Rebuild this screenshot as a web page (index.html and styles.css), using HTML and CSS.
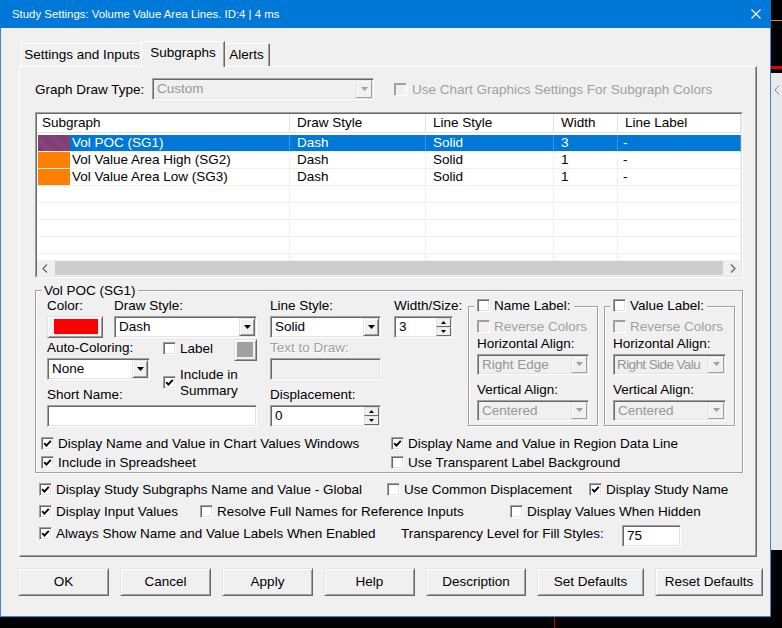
FILE: index.html
```html
<!DOCTYPE html>
<html>
<head>
	<meta charset="UTF-8">
	<title>Study Settings</title>
	<link rel="stylesheet" href="styles.css">
</head>
<body>
<div class="screen">
	<div class="main-col">
		<div class="dialog">
			<div class="titlebar">
				<span class="title">Study Settings: Volume Value Area Lines. ID:4 | 4 ms</span>
				<svg class="close" width="10" height="10" viewBox="0 0 10 10"><path d="M0.5 0.5L9.5 9.5M9.5 0.5L0.5 9.5" stroke="#fff" stroke-width="1.1"/></svg>
			</div>
			<div class="client">
				<div class="tabs">
					<div class="tab t1">Settings and Inputs</div>
					<div class="tab sel">Subgraphs</div>
					<div class="tab t3">Alerts</div>
				</div>
				<div class="panel">
					<div class="gdt">
						<span class="gdt-label">Graph Draw Type:</span>
						<div class="combo off w-gdt"><span class="val">Custom</span><span class="drop"><svg width="7" height="4" viewBox="0 0 7 4"><path d="M0 0h7L3.5 4z"/></svg></span></div>
						<label class="cb off gdt-cb"><span class="box"></span>Use Chart Graphics Settings For Subgraph Colors</label>
					</div>

					<div class="list">
						<div class="list-in">
							<div class="lhead">
								<div>Subgraph</div><div>Draw Style</div><div>Line Style</div><div>Width</div><div>Line Label</div>
							</div>
							<div class="lbody">
								<div class="lrow sel">
									<div class="c1"><span class="sw purple"></span><span class="nm">Vol POC (SG1)</span></div>
									<div>Dash</div><div>Solid</div><div>3</div><div>-</div>
								</div>
								<div class="lrow">
									<div class="c1"><span class="sw orange"></span><span class="nm">Vol Value Area High (SG2)</span></div>
									<div>Dash</div><div>Solid</div><div>1</div><div>-</div>
								</div>
								<div class="lrow">
									<div class="c1"><span class="sw orange"></span><span class="nm">Vol Value Area Low (SG3)</span></div>
									<div>Dash</div><div>Solid</div><div>1</div><div>-</div>
								</div>
								<div class="lrow"><div class="c1"></div><div></div><div></div><div></div><div></div></div>
								<div class="lrow"><div class="c1"></div><div></div><div></div><div></div><div></div></div>
								<div class="lrow"><div class="c1"></div><div></div><div></div><div></div><div></div></div>
								<div class="lrow"><div class="c1"></div><div></div><div></div><div></div><div></div></div>
								<div class="lrow"><div class="c1"></div><div></div><div></div><div></div><div></div></div>
							</div>
							<div class="hscroll">
								<span class="sbtn"><svg width="6" height="9" viewBox="0 0 6 9"><path d="M5 0.5L1 4.5L5 8.5" fill="none" stroke="#606060" stroke-width="1.2"/></svg></span>
								<span class="thumb"></span>
								<span class="sbtn"><svg width="6" height="9" viewBox="0 0 6 9"><path d="M1 0.5L5 4.5L1 8.5" fill="none" stroke="#606060" stroke-width="1.2"/></svg></span>
							</div>
						</div>
					</div>

					<fieldset class="grp main">
						<legend>Vol POC (SG1)</legend>
						<div class="form">
							<div class="col-a">
								<div class="pair p1">
									<div class="fld w-color">
										<div class="lbl">Color:</div>
										<div class="swbtn"><span class="red"></span></div>
									</div>
									<div class="fld w-ds">
										<div class="lbl">Draw Style:</div>
										<div class="combo"><span class="val">Dash</span><span class="drop"><svg width="7" height="4" viewBox="0 0 7 4"><path d="M0 0h7L3.5 4z"/></svg></span></div>
									</div>
								</div>
								<div class="pair p2">
									<div class="fld w-auto">
										<div class="lbl">Auto-Coloring:</div>
										<div class="combo"><span class="val">None</span><span class="drop"><svg width="7" height="4" viewBox="0 0 7 4"><path d="M0 0h7L3.5 4z"/></svg></span></div>
									</div>
									<div class="lblchecks">
										<label class="cb row16"><span class="box"></span>Label</label>
										<label class="cb two"><span class="box"><svg width="9" height="9" viewBox="0 0 9 9"><path d="M1.2 4.2L3.4 6.6L7.8 1.8" fill="none" stroke="#000" stroke-width="1.9"/></svg></span><span>Include in<br>Summary</span></label>
									</div>
									<div class="graybtn"><span></span></div>
								</div>
								<div class="fld">
									<div class="lbl">Short Name:</div>
									<div class="edit"></div>
								</div>
							</div>

							<div class="col-b">
								<div class="fld">
									<div class="lbl">Line Style:</div>
									<div class="combo"><span class="val">Solid</span><span class="drop"><svg width="7" height="4" viewBox="0 0 7 4"><path d="M0 0h7L3.5 4z"/></svg></span></div>
								</div>
								<div class="fld f2">
									<div class="lbl dis">Text to Draw:</div>
									<div class="edit off"></div>
								</div>
								<div class="fld f3">
									<div class="lbl">Displacement:</div>
									<div class="spin"><span class="val">0</span><span class="arrows"><span class="sb"><svg width="5" height="3" viewBox="0 0 5 3"><path d="M0 3h5L2.5 0z"/></svg></span><span class="sb"><svg width="5" height="3" viewBox="0 0 5 3"><path d="M0 0h5L2.5 3z"/></svg></span></span></div>
								</div>
							</div>

							<div class="col-c">
								<div class="fld">
									<div class="lbl">Width/Size:</div>
									<div class="spin"><span class="val">3</span><span class="arrows"><span class="sb"><svg width="5" height="3" viewBox="0 0 5 3"><path d="M0 3h5L2.5 0z"/></svg></span><span class="sb"><svg width="5" height="3" viewBox="0 0 5 3"><path d="M0 0h5L2.5 3z"/></svg></span></span></div>
								</div>
							</div>

							<fieldset class="grp sub sub-name">
								<legend><label class="cb"><span class="box"></span>Name Label:</label></legend>
								<label class="cb off rev"><span class="box"></span>Reverse Colors</label>
								<div class="lbl s1">Horizontal Align:</div>
								<div class="combo off"><span class="val">Right Edge</span><span class="drop"><svg width="7" height="4" viewBox="0 0 7 4"><path d="M0 0h7L3.5 4z"/></svg></span></div>
								<div class="lbl s2">Vertical Align:</div>
								<div class="combo off"><span class="val">Centered</span><span class="drop"><svg width="7" height="4" viewBox="0 0 7 4"><path d="M0 0h7L3.5 4z"/></svg></span></div>
							</fieldset>

							<fieldset class="grp sub sub-value">
								<legend><label class="cb"><span class="box"></span>Value Label:</label></legend>
								<label class="cb off rev"><span class="box"></span>Reverse Colors</label>
								<div class="lbl s1">Horizontal Align:</div>
								<div class="combo off"><span class="val tight">Right Side Valu</span><span class="drop"><svg width="7" height="4" viewBox="0 0 7 4"><path d="M0 0h7L3.5 4z"/></svg></span></div>
								<div class="lbl s2">Vertical Align:</div>
								<div class="combo off"><span class="val">Centered</span><span class="drop"><svg width="7" height="4" viewBox="0 0 7 4"><path d="M0 0h7L3.5 4z"/></svg></span></div>
							</fieldset>
						</div>

						<div class="checks">
							<div class="crow">
								<label class="cb w350"><span class="box"><svg width="9" height="9" viewBox="0 0 9 9"><path d="M1.2 4.2L3.4 6.6L7.8 1.8" fill="none" stroke="#000" stroke-width="1.9"/></svg></span>Display Name and Value in Chart Values Windows</label>
								<label class="cb"><span class="box"><svg width="9" height="9" viewBox="0 0 9 9"><path d="M1.2 4.2L3.4 6.6L7.8 1.8" fill="none" stroke="#000" stroke-width="1.9"/></svg></span>Display Name and Value in Region Data Line</label>
							</div>
							<div class="crow">
								<label class="cb w350"><span class="box"><svg width="9" height="9" viewBox="0 0 9 9"><path d="M1.2 4.2L3.4 6.6L7.8 1.8" fill="none" stroke="#000" stroke-width="1.9"/></svg></span>Include in Spreadsheet</label>
								<label class="cb"><span class="box"></span>Use Transparent Label Background</label>
							</div>
						</div>
					</fieldset>

					<div class="opts">
						<div class="orow">
							<label class="cb w348"><span class="box"><svg width="9" height="9" viewBox="0 0 9 9"><path d="M1.2 4.2L3.4 6.6L7.8 1.8" fill="none" stroke="#000" stroke-width="1.9"/></svg></span>Display Study Subgraphs Name and Value - Global</label>
							<label class="cb w202"><span class="box"></span>Use Common Displacement</label>
							<label class="cb"><span class="box"><svg width="9" height="9" viewBox="0 0 9 9"><path d="M1.2 4.2L3.4 6.6L7.8 1.8" fill="none" stroke="#000" stroke-width="1.9"/></svg></span>Display Study Name</label>
						</div>
						<div class="orow">
							<label class="cb w161"><span class="box"><svg width="9" height="9" viewBox="0 0 9 9"><path d="M1.2 4.2L3.4 6.6L7.8 1.8" fill="none" stroke="#000" stroke-width="1.9"/></svg></span>Display Input Values</label>
							<label class="cb w310"><span class="box"></span>Resolve Full Names for Reference Inputs</label>
							<label class="cb"><span class="box"></span>Display Values When Hidden</label>
						</div>
						<div class="orow">
							<label class="cb w362"><span class="box"><svg width="9" height="9" viewBox="0 0 9 9"><path d="M1.2 4.2L3.4 6.6L7.8 1.8" fill="none" stroke="#000" stroke-width="1.9"/></svg></span>Always Show Name and Value Labels When Enabled</label>
							<span class="w221">Transparency Level for Fill Styles:</span>
							<div class="edit trans"><span class="val">75</span></div>
						</div>
					</div>
				</div>

				<div class="buttons">
					<div class="btn w91">OK</div>
					<div class="btn w91">Cancel</div>
					<div class="btn w91">Apply</div>
					<div class="btn w91">Help</div>
					<div class="btn w100">Description</div>
					<div class="btn w107">Set Defaults</div>
					<div class="btn w108">Reset Defaults</div>
				</div>
			</div>
		</div>
		<div class="under"><span></span></div>
	</div>
	<div class="strip">
		<div class="s-black h20"></div>
		<div class="s-orange"></div>
		<div class="s-black h45"></div>
		<div class="s-red"></div>
		<div class="s-black h4"></div>
		<div class="s-gray"><svg width="6" height="10" viewBox="0 0 6 10"><path d="M5 0.5L1 5L5 9.5" fill="none" stroke="#888" stroke-width="1"/></svg></div>
	</div>
</div>
</body>
</html>
```

FILE: styles.css
```css
body{
	margin: 0;
	background: #000;
	font-family: "Liberation Sans", Arial, sans-serif;
	font-size: 13.5px;
	color: #000;
}
.screen{
	display: flex;
	width: 782px;
	height: 628px;
	overflow: hidden;
}
.main-col{
	width: 771px;
	display: flex;
	flex-direction: column;
}
.dialog{
	height: 617px;
	box-sizing: border-box;
	border: 1px solid #3a86d4;
	border-top: 0;
	background: #f0f0f0;
}
.titlebar{
	height: 28px;
	margin: 0 -1px;
	background: #0078d7;
	display: flex;
	align-items: center;
	padding: 0 10px 0 12px;
	color: #fff;
	font-size: 11.4px;
}
.close{
	margin-left: auto;
}
.client{
	padding: 13px 0 0 18px;
}

/* tabs */
.tabs{
	display: flex;
	align-items: flex-end;
	height: 25px;
	padding-left: 2px;
}
.tab{
	height: 23px;
	box-sizing: border-box;
	border: 1px solid;
	border-bottom: 0;
	border-color: #fff #696969 transparent #fff;
	box-shadow: inset -1px 0 #a0a0a0;
	text-align: center;
	line-height: 21px;
	white-space: nowrap;
}
.t1{ width: 122px; }
.t3{ width: 47px; }
.tab.sel{
	width: 84px;
	height: 26px;
	margin: 0 -2px -1px;
	position: relative;
	z-index: 1;
	background: #f0f0f0;
	line-height: 22px;
}
.panel{
	width: 738px;
	height: 491px;
	box-sizing: border-box;
	border: 1px solid;
	border-color: #fff #696969 #696969 #fff;
	box-shadow: inset -1px -1px #a0a0a0;
	padding: 11px 13px 0 15px;
}

/* common controls */
.combo,.edit,.spin{
	height: 22px;
	box-sizing: border-box;
	border: 1px solid;
	border-color: #a0a0a0 #fff #fff #a0a0a0;
	box-shadow: inset 1px 1px #696969, inset -1px -1px #e3e3e3;
	background: #fff;
	display: flex;
}
.combo .val,.spin .val,.edit .val{
	flex: 1;
	min-width: 0;
	padding-left: 4px;
	line-height: 20px;
	white-space: nowrap;
	overflow: hidden;
}
.combo .val.tight{
	padding-left: 3px;
	letter-spacing: -0.6px;
}
.combo .drop{
	width: 16px;
	flex: none;
	margin: 1px 1px 1px 0;
	box-sizing: border-box;
	border: 1px solid;
	border-color: #e3e3e3 #696969 #696969 #e3e3e3;
	box-shadow: inset 1px 1px #fff, inset -1px -1px #a0a0a0;
	background: #f0f0f0;
	display: flex;
	align-items: center;
	justify-content: center;
}
.combo.off,.edit.off{
	background: #f0f0f0;
}
.combo.off .val{
	color: #969696;
}
.combo.off .drop{
	border-color: #e3e3e3 #a0a0a0 #a0a0a0 #e3e3e3;
	box-shadow: inset 1px 1px #fff;
}
.combo.off .drop svg{
	fill: #a0a0a0;
}
.spin .arrows{
	width: 15px;
	margin: 1px 1px 1px 0;
	display: flex;
	flex-direction: column;
}
.spin .sb{
	flex: 1;
	box-sizing: border-box;
	border: 1px solid;
	border-color: #e3e3e3 #696969 #696969 #e3e3e3;
	background: #f0f0f0;
	display: flex;
	align-items: center;
	justify-content: center;
}
.cb{
	display: inline-flex;
	align-items: center;
	gap: 4px;
	white-space: nowrap;
}
.box{
	width: 13px;
	height: 13px;
	flex: none;
	box-sizing: border-box;
	border: 1px solid;
	border-color: #a0a0a0 #fff #fff #a0a0a0;
	box-shadow: inset 1px 1px #696969, inset -1px -1px #e3e3e3;
	background: #fff;
	display: flex;
	align-items: center;
	justify-content: center;
}
.cb.off{
	color: #a0a0a0;
}
.cb.off .box{
	background: #f0f0f0;
	box-shadow: inset 1px 1px #a0a0a0;
}
.lbl{
	line-height: 15px;
	margin-bottom: 3px;
	white-space: nowrap;
}
.lbl.dis{
	color: #a0a0a0;
	text-shadow: 1px 1px #fff;
}

/* graph draw type row */
.gdt{
	display: flex;
	align-items: center;
	height: 22px;
}
.gdt-label{
	width: 117px;
}
.w-gdt{
	width: 222px;
}
.gdt-cb{
	margin-left: 20px;
	gap: 5px;
}

/* subgraph list */
.list{
	margin-top: 12px;
	height: 166px;
	box-sizing: border-box;
	border: 1px solid;
	border-color: #a0a0a0 #fff #fff #a0a0a0;
}
.list-in{
	height: 100%;
	box-sizing: border-box;
	border: 1px solid;
	border-color: #696969 #e3e3e3 #e3e3e3 #696969;
	background: #fff;
	display: flex;
	flex-direction: column;
}
.lhead,.lrow{
	display: grid;
	grid-template-columns: 253px 136px 128px 64px 1fr;
}
.lhead > div{
	height: 19px;
	box-sizing: border-box;
	border-right: 1px solid #e5e5e5;
	border-bottom: 1px solid #e5e5e5;
	padding-left: 7px;
	line-height: 18px;
}
.lhead > div:first-child{
	padding-left: 5px;
}
.lbody{
	flex: 1;
	overflow: hidden;
	padding-top: 2px;
}
.lrow{
	height: 17px;
}
.lrow > div{
	box-sizing: border-box;
	border-right: 1px solid #f0f0f0;
	border-bottom: 1px solid #f0f0f0;
	padding-left: 7px;
	line-height: 16px;
	white-space: nowrap;
}
.lrow > div:last-child{
	padding-left: 5px;
}
.lrow > .c1{
	display: flex;
	padding-left: 0;
}
.sw{
	width: 32px;
	margin-left: 1px;
	height: 16px;
}
.sw.purple{
	background: repeating-linear-gradient(45deg, #7a3a70 0 1px, #8a4a80 1px 2px);
}
.sw.orange{
	background: #ff7f00;
}
.nm{
	flex: 1;
	padding-left: 2px;
}
.lrow.sel > div:not(.c1),.lrow.sel .nm{
	background: #0078d7;
	color: #fff;
}
.lrow.sel > div{
	border-right-color: #3d96e0;
}
.hscroll{
	height: 16px;
	display: flex;
	background: #f0f0f0;
}
.sbtn{
	width: 16px;
	display: flex;
	align-items: center;
	justify-content: center;
}
.thumb{
	flex: 1;
	background: #cdcdcd;
	margin: 1px 2px;
}

/* group boxes */
.grp{
	margin: 0;
	padding: 0;
	min-width: 0;
	border: 1px solid #a0a0a0;
	box-shadow: 1px 1px #fff, inset 1px 1px #fff;
}
.grp legend{
	padding: 0 2px;
	line-height: 15px;
	background: #f0f0f0;
}
.grp.main{
	margin-top: 5px;
	padding: 0 5px;
}
.grp.main > legend{
	margin-left: 1px;
}
.form{
	display: flex;
	margin-left: 6px;
	height: 129px;
}
.col-a{
	width: 210px;
}
.pair{
	display: flex;
}
.p1{
	margin-bottom: 2px;
}
.p2{
	height: 47px;
}
.w-color{ width: 56px; }
.w-ds{ width: 143px; margin-left: 11px; }
.w-auto{ width: 103px; }
.swbtn,.graybtn{
	height: 22px;
	box-sizing: border-box;
	border: 1px solid;
	border-color: #e3e3e3 #696969 #696969 #e3e3e3;
	box-shadow: inset 1px 1px #fff, inset -1px -1px #a0a0a0;
	background: #f0f0f0;
}
.swbtn{
	padding: 2px 4px 3px 6px;
}
.swbtn span{
	display: block;
	height: 100%;
	background: #ff0000;
}
.lblchecks{
	width: 71px;
	margin-left: 13px;
}
.row16{
	height: 16px;
}
.cb.two{
	margin-top: 9px;
	line-height: 16px;
}
.graybtn{
	width: 23px;
	margin-top: -1px;
	padding: 2px 3px 3px 2px;
}
.graybtn span{
	display: block;
	height: 100%;
	background: #a0a0a0;
}
.col-b{
	width: 111px;
	margin-left: 13px;
}
.f2{ margin-top: 2px; }
.f3{ margin-top: 7px; }
.col-c{
	width: 59px;
	margin-left: 13px;
}
.grp.sub{
	height: 128px;
	box-sizing: border-box;
	padding: 0 8px;
}
.grp.sub legend{
	margin-left: -3px;
	padding: 0 3px;
}
.sub-name{
	width: 130px;
	margin-left: 15px;
}
.sub-value{
	width: 131px;
	margin-left: 6px;
}
.rev{
	margin-top: 3px;
	height: 16px;
}
.sub .lbl{
	margin-bottom: 3px;
}
.sub .s1{ margin-top: 0; }
.sub .s2{ margin-top: 7px; }
.sub .combo{
	height: 21px;
}
.checks{
	margin-top: 7px;
}
.crow{
	display: flex;
	height: 19px;
	align-items: center;
}
.w350{ width: 350px; }

/* options below the group */
.opts{
	margin: 5px 0 0 4px;
}
.orow{
	display: flex;
	align-items: center;
	height: 22px;
}
.w348{ width: 348px; }
.w202{ width: 202px; }
.w161{ width: 161px; }
.w310{ width: 310px; }
.w362{ width: 362px; }
.w221{ width: 221px; }
.edit.trans{
	width: 59px;
	align-self: flex-start;
	margin-top: 3px;
}

/* buttons */
.buttons{
	display: flex;
	gap: 11px;
	margin: 11px 0 0 -1px;
}
.btn{
	height: 28px;
	box-sizing: border-box;
	border: 1px solid;
	border-color: #e3e3e3 #696969 #696969 #e3e3e3;
	box-shadow: inset 1px 1px #fff, inset -1px -1px #a0a0a0;
	background: #f0f0f0;
	text-align: center;
	line-height: 26px;
	white-space: nowrap;
}
.w91{ width: 91px; }
.w100{ width: 100px; }
.w107{ width: 107px; }
.w108{ width: 108px; }

/* desktop behind the dialog */
.under{
	height: 11px;
	padding-left: 554px;
}
.under span{
	display: block;
	width: 1px;
	height: 100%;
	background: #c00000;
}
.strip{
	width: 11px;
	display: flex;
	flex-direction: column;
}
.s-black{ background: #000; }
.h20{ height: 20px; }
.h45{ height: 45px; }
.h4{ height: 4px; }
.s-orange{ height: 1px; background: #e0892a; }
.s-red{ height: 3px; background: #e00000; }
.s-gray{
	height: 467px;
	background: #e9e9e9;
	padding: 10px 0 0 3px;
}
```
